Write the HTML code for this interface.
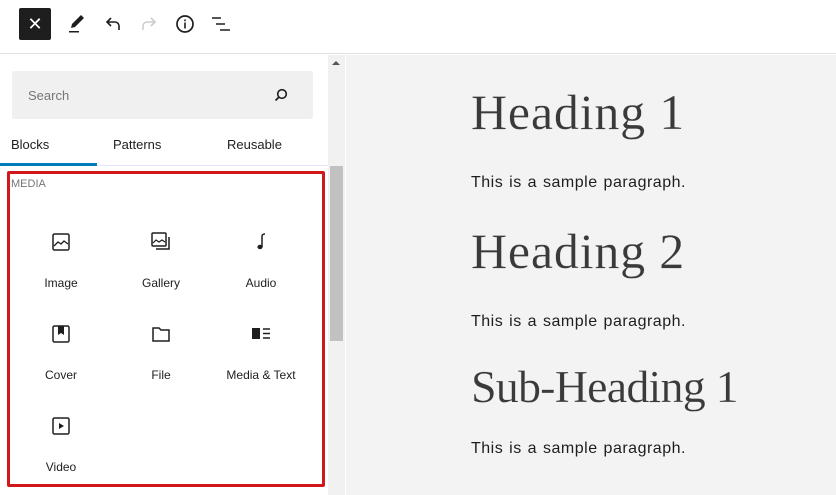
<!DOCTYPE html>
<html><head><style>
*{margin:0;padding:0;box-sizing:border-box}
body{width:836px;height:495px;overflow:hidden;background:#fff;font-family:"Liberation Sans","DejaVu Sans",sans-serif;position:relative}
.top{position:absolute;left:0;top:0;width:836px;height:54px;border-bottom:1px solid #e0e0e0;background:#fff}
.x{position:absolute;left:19px;top:8px;width:32px;height:32px;background:#1e1e1e;border-radius:2px;color:#fff;font-size:18px;text-align:center;line-height:32px}
.ic{position:absolute;top:12px}
.side{position:absolute;left:0;top:55px;width:345px;height:440px;background:#fff;border-right:1px solid #e0e0e0}
.search{position:absolute;left:12px;top:16px;width:301px;height:48px;background:#f0f0f0;border-radius:2px;color:#757575;font-size:13px;padding:17px 16px}
.tab{position:absolute;top:82px;font-size:13px;color:#1e1e1e}
.tabline{position:absolute;left:0;top:108px;width:97px;height:3px;background:#007cba}
.tabbord{position:absolute;left:0;top:110px;width:328px;height:1px;background:#e5e5ff}
.scroll{position:absolute;left:328px;top:0;width:17px;height:440px;background:#f1f1f1}
.thumb{position:absolute;left:330px;top:111px;width:13px;height:175px;background:#c1c1c1}
.red{position:absolute;left:7px;top:116px;width:318px;height:316px;border:3px solid #d0171b;border-radius:2px}
.media{position:absolute;left:11px;top:123px;font-size:11px;color:#757575}
.blk{position:absolute;width:100px;text-align:center;font-size:12px;color:#1e1e1e}
.blk svg{display:block;margin:0 auto 22px}
.main{position:absolute;left:346px;top:55px;width:490px;height:440px;background:#f3f3f3}
h1{position:absolute;left:125px;font-family:"Liberation Serif","Noto Serif CJK SC",serif;font-weight:normal;font-size:50px;color:#3a3a3a;white-space:nowrap;-webkit-text-stroke:0.2px #f3f3f3}
p{position:absolute;left:125px;font-size:16px;color:#1e1e1e;letter-spacing:.5px;word-spacing:1px}
</style></head><body>
<div class="top">
<div class="x">✕</div>
<svg class="ic" style="left:64px" width="24" height="24" viewBox="0 0 24 24"><path d="M7 16l1-4 9-9 3 3-9 9z" fill="#1e1e1e"/><rect x="5" y="19" width="10" height="1.5" fill="#1e1e1e"/></svg>
<svg class="ic" style="left:101px" width="24" height="24" viewBox="0 0 24 24"><path d="M18 18v-4a4 4 0 0 0-4-4H6M10 6l-4 4 4 4" fill="none" stroke="#1e1e1e" stroke-width="1.6"/></svg>
<svg class="ic" style="left:137px" width="24" height="24" viewBox="0 0 24 24"><path d="M6 18v-4a4 4 0 0 1 4-4h8M14 6l4 4-4 4" fill="none" stroke="#ccc" stroke-width="1.6"/></svg>
<svg class="ic" style="left:173px" width="24" height="24" viewBox="0 0 24 24"><circle cx="12" cy="12" r="8" fill="none" stroke="#1e1e1e" stroke-width="1.7"/><rect x="11.2" y="10.5" width="1.6" height="6" fill="#1e1e1e"/><rect x="11.2" y="7.5" width="1.6" height="1.7" fill="#1e1e1e"/></svg>
<svg class="ic" style="left:209px" width="24" height="24" viewBox="0 0 24 24"><path d="M3 6h9M7 12h9M11 18h10" stroke="#1e1e1e" stroke-width="1.6"/></svg>
</div>
<div class="side">
<div class="search">Search
<svg style="position:absolute;right:24px;top:16px" width="16" height="16" viewBox="0 0 16 16"><circle cx="9" cy="7" r="4.3" fill="none" stroke="#1e1e1e" stroke-width="1.6"/><path d="M6 10l-3.5 3.5" stroke="#1e1e1e" stroke-width="1.7"/></svg></div>
<div class="tab" style="left:11px">Blocks</div>
<div class="tab" style="left:113px">Patterns</div>
<div class="tab" style="left:227px">Reusable</div>
<div class="tabbord"></div><div class="tabline"></div>
<div class="scroll"><div style="position:absolute;left:4px;top:6px;border:4px solid transparent;border-bottom:4px solid #555;border-top:0;width:0"></div></div>
<div class="thumb"></div>
<div class="red"></div>
<div class="media">MEDIA</div>
<div class="blk" style="left:11px;top:175px"><svg width="24" height="24" viewBox="0 0 24 24"><rect x="4" y="4" width="16" height="16" rx="1.5" fill="none" stroke="#1e1e1e" stroke-width="1.5"/><path d="M5 16l4-4 3 2 3-3 4 3" fill="none" stroke="#1e1e1e" stroke-width="1.3"/></svg>Image</div>
<div class="blk" style="left:111px;top:175px"><svg width="24" height="24" viewBox="0 0 24 24"><rect x="3" y="3" width="14" height="13" rx="1" fill="none" stroke="#1e1e1e" stroke-width="1.5"/><path d="M4 13l3-3 3 2 3-2 3 2" fill="none" stroke="#1e1e1e" stroke-width="1.2"/><path d="M20 7v12H7" fill="none" stroke="#1e1e1e" stroke-width="1.5"/></svg>Gallery</div>
<div class="blk" style="left:211px;top:175px"><svg width="24" height="24" viewBox="0 0 24 24"><path d="M13 17V6c0-1 1-2 3-2" fill="none" stroke="#1e1e1e" stroke-width="1.5"/><ellipse cx="11" cy="17" rx="2.6" ry="2.2" fill="#1e1e1e"/></svg>Audio</div>
<div class="blk" style="left:11px;top:267px"><svg width="24" height="24" viewBox="0 0 24 24"><rect x="4" y="4" width="16" height="16" rx="1.5" fill="none" stroke="#1e1e1e" stroke-width="1.5"/><path d="M9 4v9l3-2 3 2V4z" fill="#1e1e1e"/></svg>Cover</div>
<div class="blk" style="left:111px;top:267px"><svg width="24" height="24" viewBox="0 0 24 24"><path d="M4 6h6l2 2h8v11H4z" fill="none" stroke="#1e1e1e" stroke-width="1.5"/></svg>File</div>
<div class="blk" style="left:211px;top:267px"><svg width="24" height="24" viewBox="0 0 24 24"><rect x="3" y="6" width="8" height="11" fill="#1e1e1e"/><path d="M14 7h7M14 11.5h7M14 16h7" stroke="#1e1e1e" stroke-width="1.5"/></svg>Media &amp; Text</div>
<div class="blk" style="left:11px;top:359px"><svg width="24" height="24" viewBox="0 0 24 24"><rect x="4" y="4" width="16" height="16" rx="1.5" fill="none" stroke="#1e1e1e" stroke-width="1.5"/><path d="M10 9v6l5-3z" fill="#1e1e1e"/></svg>Video</div>
</div>
<div class="main">
<h1 style="top:28px;letter-spacing:.8px">Heading 1</h1>
<p style="top:119px">This is a sample paragraph.</p>
<h1 style="top:167px;letter-spacing:.8px">Heading 2</h1>
<p style="top:258px">This is a sample paragraph.</p>
<h1 style="top:305px;font-size:46px;letter-spacing:-0.8px">Sub-Heading 1</h1>
<p style="top:385px">This is a sample paragraph.</p>
</div>
</body></html>
